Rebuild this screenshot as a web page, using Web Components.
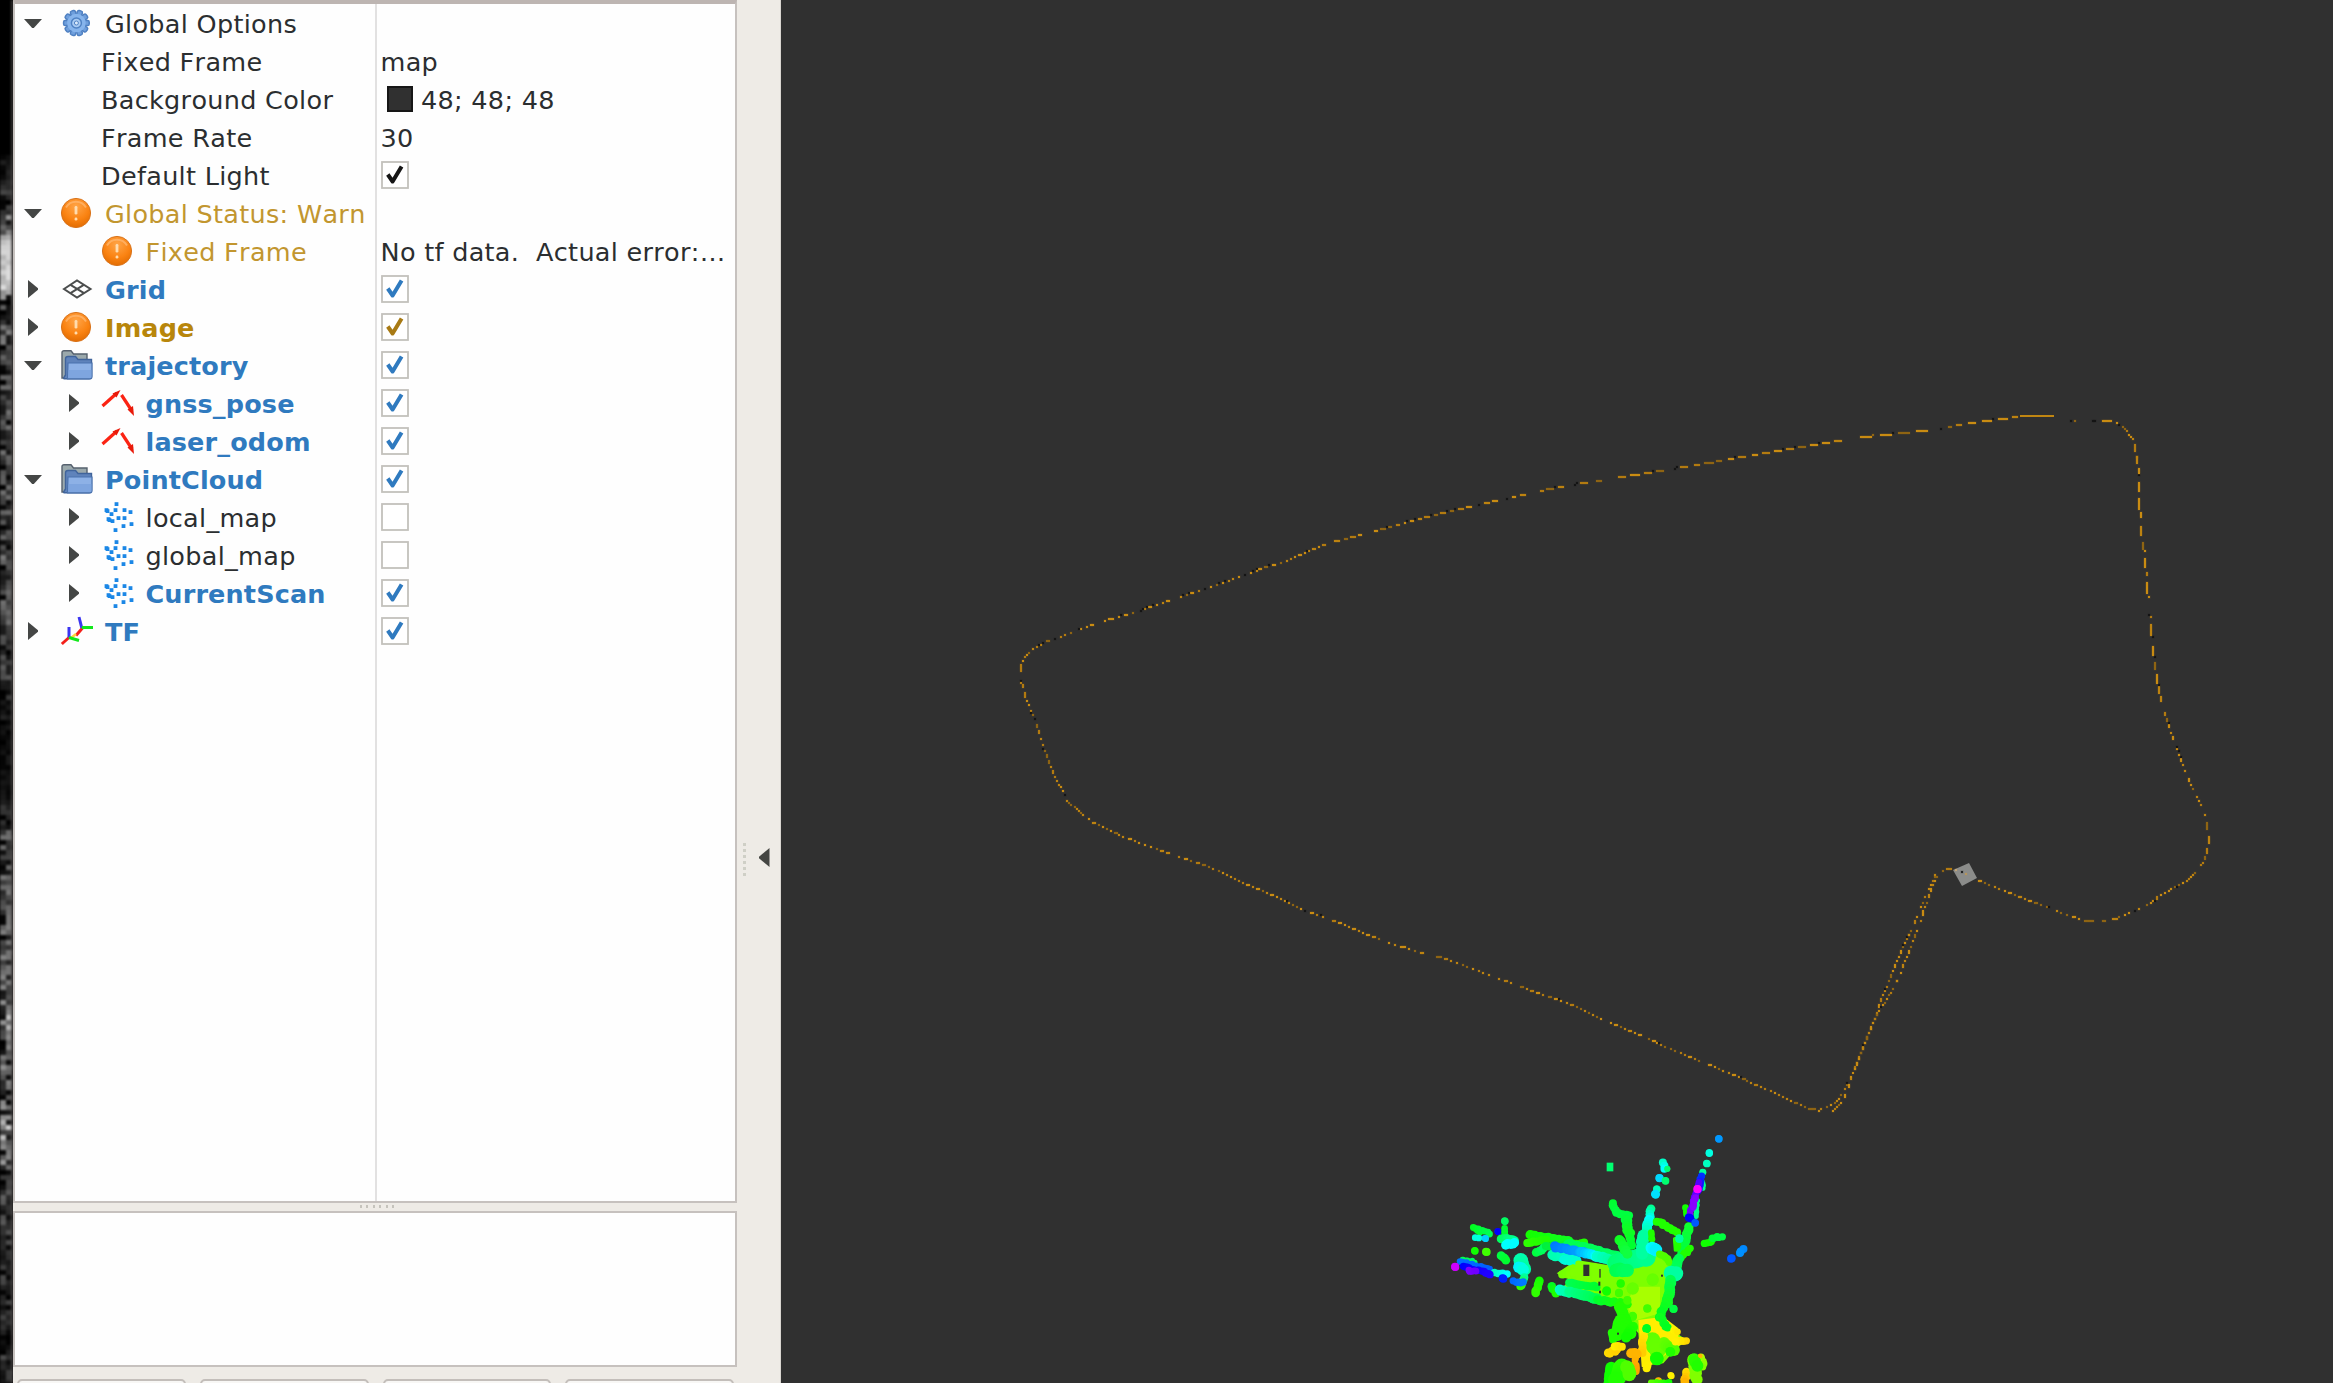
<!DOCTYPE html>
<html lang="en">
<head>
<meta charset="utf-8">
<title>RViz</title>
<style>
html,body{margin:0;height:100%;overflow:hidden;background:#303030}
</style>
</head>
<body>
<rviz-window></rviz-window>

<script>
const BLUE = '#2f7abf', WARN = '#c2962f', WARNB = '#b8860b', INK = '#2b2e30';

function rng(seed){ return () => { seed = (seed * 1664525 + 1013904223) >>> 0; return seed / 4294967296; }; }

function define(name, html, init){
  customElements.define(name, class extends HTMLElement {
    constructor(){
      super();
      this.attachShadow({mode:'open'}).innerHTML = html;
    }
    connectedCallback(){ if (init && !this.ready) { this.ready = true; init(this, this.shadowRoot); } }
  });
}

/* ---------- icons ---------- */
const dots = [[15,1],[5,7],[10,11],[14,7],[23,7],[29,9],[7,16],[11,18],[17,15],[23,15],[30,21],[22,23],[14,27],[8,17],[6,8]];
const gearTeeth = Array.from({length:10}, (_,i) => `<rect x="12.8" y="2.200" width="5.200" height="6" rx="1.6" transform="rotate(${i*36+18} 15.4 15)"/>`).join('');
const ICONS = {
  gear: `<g fill="#6f9fdc" stroke="#4f80c2" stroke-width="1.5">${gearTeeth}</g>
    <circle cx="15.4" cy="15" r="9.3" fill="#86b4ec"/>
    <circle cx="15.4" cy="15" r="5" fill="#a9cbf3" stroke="#4f82c4" stroke-width="1.5"/>
    <circle cx="15.4" cy="15" r="2" fill="#dcebfc" stroke="#4f82c4" stroke-width="1"/>`,
  warn: `<defs><radialGradient id="g" cx=".5" cy=".28" r=".75"><stop offset="0" stop-color="#ffa548"/><stop offset=".6" stop-color="#fa8312"/><stop offset="1" stop-color="#e06a00"/></radialGradient></defs>
    <circle cx="15" cy="15" r="14.6" fill="url(#g)" stroke="#d9741c" stroke-width="1"/>
    <path d="M5 9.5A11.5 11.5 0 0 1 25 9.5" fill="none" stroke="#ffb56b" stroke-width="2" opacity=".8"/>
    <g fill="#ffdcae"><rect x="13.6" y="8" width="2.800" height="8.500" rx="1.300"/><rect x="13.6" y="19.500" width="2.800" height="3" rx="1.300"/></g>`,
  grid: `<g fill="none" stroke="#4b4d4d" stroke-width="2"><path d="M3 15L16 6.5L29.5 15L16 23.5Z"/><path d="M9.5 10.8L23 19.2M22.8 10.8L9.5 19.2"/></g>`,
  folder: `<path d="M1 2.5Q1 .8 3 .8H10L12.500 4H26V28H1Z" fill="#9ba9ac" stroke="#56616e" stroke-width="1.4"/>
    <path d="M4.500 9Q4.500 6.500 7 6.500H14.500L17 9.500H30.500V26Q30.500 28.800 28 28.800H3Q2 28.500 4.500 25Z" fill="#5f83bb" stroke="#40649b" stroke-width="1.4"/>
    <path d="M7 13H31V26.500Q31 28.800 29 28.800H6.500Z" fill="#8db1e6" stroke="#4a72ad" stroke-width="1.2"/>
    <path d="M7.500 20H30.500V28H7Z" fill="#77a0dc" opacity=".7"/>`,
  path: `<g fill="none" stroke="#fb2313" stroke-width="3.2"><path d="M0.500 18L15 5"/><path d="M19.500 7L30 23"/></g>
    <g fill="#e81a0a"><path d="M18.500 2L14.500 9.500L10.500 5.500Z"/><path d="M32 28L31 18L25.500 21.500Z"/></g>`,
  cloud: dots.map(([x,y]) => `<rect x="${x-2.4}" y="${y-.8}" width="3.8" height="3.8" fill="#1b87e6"/>`).join(''),
  tf: `<g fill="none" stroke-width="3"><path d="M21.500 12L15 19.500" stroke="#f4201a"/><path d="M15 18L10 22" stroke="#ffd23c" stroke-width="2.400"/><path d="M20.800 12L18 1" stroke="#3b35f0"/><path d="M20.800 11.500H32" stroke="#12e81c"/>
    <path d="M8 21.500L.8 28" stroke="#f4201a"/><path d="M8 21.500V11" stroke="#3b35f0"/><path d="M8 21.500L18 24.500" stroke="#12e81c"/></g>`
};
define('rv-icon', `<style>:host{display:block;white-space:normal;width:32px;height:30px;flex:none}svg{display:block;overflow:visible}</style><svg width="32" height="30" viewBox="0 0 32 30"></svg>`,
  (el, r) => { r.querySelector('svg').innerHTML = ICONS[el.getAttribute('name')] || ''; });

define('rv-arrow', `<style>:host{display:flex;white-space:normal;width:36px;height:38px;flex:none;align-items:center;justify-content:center}svg{display:block}</style><svg width="18" height="18" viewBox="0 0 18 18"><path fill="#444645"/></svg>`,
  (el, r) => r.querySelector('path').setAttribute('d', el.hasAttribute('open') ? 'M0 5H18L9.8 14H8.2Z' : 'M4 0L14 8.300V9.700L4 18Z'));

define('rv-check', `<style>:host{display:block;white-space:normal;width:28px;height:28px;flex:none}svg{display:block}</style><svg width="28" height="28" viewBox="0 0 28 28"><rect x="1" y="1" width="26" height="26" fill="#fff" stroke="#c3c1bc" stroke-width="1.800"/><path fill="none" stroke-width="4" d="M6.800 13.500L11.600 20.500L20.600 5.500" stroke-linejoin="round"/></svg>`,
  (el, r) => { const p = r.querySelector('path'); if (el.hasAttribute('off')) p.remove(); else p.setAttribute('stroke', el.getAttribute('color')); });

/* ---------- one property row ---------- */
define('rv-row', `<style>
:host{display:grid;grid-template-columns:360px 2px 1fr;height:38px;font:25.5px "DejaVu Sans",sans-serif;font-kerning:none;letter-spacing:.3px;color:${INK};white-space:pre}
.l,.v{display:flex;align-items:center;height:38px;min-width:0}
.l span,.v span{height:38px;line-height:40px;display:block}
.v{grid-column:3}
.name{font-weight:var(--w,400);color:var(--c,${INK});letter-spacing:var(--ls,.3px)}
rv-icon{margin:0 12px 0 0}
rv-check{margin-left:4px}
.v span{padding-left:3.500px}
i{display:block;box-sizing:border-box;width:26px;height:26px;margin-left:10px;background:#303030;border:2px solid #161616}
i + span{padding-left:8px!important}
</style><div class="l"></div><div class="v"></div>`,
(el, r) => {
  const a = n => el.getAttribute(n), l = r.querySelector('.l'), v = r.querySelector('.v');
  const depth = +(a('depth') || 0), icon = a('icon');
  l.style.paddingLeft = (icon ? depth * 40.5 : 86) + 'px';
  let h = '';
  if (icon) {
    h += a('state') === 'leaf' ? '<div style="width:36px"></div>' : `<rv-arrow ${a('state') === 'open' ? 'open' : ''}></rv-arrow>`;
    h += `<div style="width:10px"></div><rv-icon name="${icon}"></rv-icon>`;
  }
  l.innerHTML = h + '<span class="name"></span>';
  l.querySelector('.name').textContent = a('name');
  if (a('color')) el.style.setProperty('--c', a('color'));
  if (el.hasAttribute('bold')) { el.style.setProperty('--w', 700); el.style.setProperty('--ls', '.15px'); }
  if (a('check') === 'off') v.innerHTML = '<rv-check off></rv-check>';
  else if (a('check')) v.innerHTML = `<rv-check color="${a('check')}"></rv-check>`;
  else if (a('value')) {
    v.innerHTML = (el.hasAttribute('swatch') ? '<i></i>' : '') + '<span></span>';
    v.querySelector('span').textContent = a('value');
  }
});

/* ---------- display tree ---------- */
const ROWS = [
  {name:'Global Options', icon:'gear', state:'open'},
  {name:'Fixed Frame', value:'map'},
  {name:'Background Color', value:'48; 48; 48', swatch:''},
  {name:'Frame Rate', value:'30'},
  {name:'Default Light', check:'#151515'},
  {name:'Global Status: Warn', icon:'warn', state:'open', color:WARN},
  {name:'Fixed Frame', icon:'warn', state:'leaf', depth:1, color:WARN, value:'No tf data.  Actual error:…'},
  {name:'Grid', icon:'grid', state:'shut', color:BLUE, bold:'', check:BLUE},
  {name:'Image', icon:'warn', state:'shut', color:WARNB, bold:'', check:'#a87a14'},
  {name:'trajectory', icon:'folder', state:'open', color:BLUE, bold:'', check:BLUE},
  {name:'gnss_pose', icon:'path', state:'shut', depth:1, color:BLUE, bold:'', check:BLUE},
  {name:'laser_odom', icon:'path', state:'shut', depth:1, color:BLUE, bold:'', check:BLUE},
  {name:'PointCloud', icon:'folder', state:'open', color:BLUE, bold:'', check:BLUE},
  {name:'local_map', icon:'cloud', state:'shut', depth:1, check:'off'},
  {name:'global_map', icon:'cloud', state:'shut', depth:1, check:'off'},
  {name:'CurrentScan', icon:'cloud', state:'shut', depth:1, color:BLUE, bold:'', check:BLUE},
  {name:'TF', icon:'tf', state:'shut', color:BLUE, bold:'', check:BLUE}
];
define('rv-tree', `<style>
:host{display:block;box-sizing:border-box;height:1203px;border:2px solid #c6c1be;border-top:4px solid #bdb5b2;
 background:linear-gradient(90deg,transparent 360px,#e2e1e1 360px,#e2e1e1 362px,transparent 362px),#fefefe}
</style>`, (el, r) => {
  for (const d of ROWS) {
    const e = document.createElement('rv-row');
    for (const k in d) e.setAttribute(k, d[k]);
    r.append(e);
  }
});

define('rv-description', `<style>:host{display:block;box-sizing:border-box;height:156px;background:#fefefe;border:2px solid #c6c1be}</style>`);

define('rv-splitter', `<style>:host{display:flex;height:8px;gap:4.500px;justify-content:center;padding:2px 0 0 4px;box-sizing:border-box}
b{width:2px;height:3px;background:#c5c3bc}</style><b></b><b></b><b></b><b></b><b></b><b></b>`);

define('rv-buttons', `<style>:host{display:flex;gap:14px;padding:12px 3px 0 4px;height:16px;box-sizing:border-box;overflow:hidden}
b{flex:1;height:30px;box-sizing:border-box;border:2px solid #c3beba;border-radius:5px;background:#f8f7f5}b:first-child{border-color:#b3aeaa}</style><b></b><b></b><b></b><b></b>`);

define('rv-collapse', `<style>:host{display:flex;width:44px;box-sizing:border-box;border-right:1px solid #d9d5d0;background:#eeebe6;align-items:center;padding:336px 0 0 5.500px;gap:13.500px}
div{display:grid;gap:3.500px}b{width:3px;height:2.500px;background:#cfcfc6}svg{display:block;margin-top:-4px}</style>
<div><b></b><b></b><b></b><b></b><b></b><b></b></div><svg width="11" height="19" viewBox="0 0 11 19"><path d="M10.500 0V19L0 10.200V8.800Z" fill="#444542"/></svg>`);

/* ---------- sliver of the camera image at the window edge ---------- */
define('rv-camera', `<style>:host{display:block;width:13px;height:1383px;background:#000;overflow:hidden}canvas{display:block;filter:blur(1.200px)}</style><canvas width="13" height="1383"></canvas>`,
(el, r) => {
  const c = r.querySelector('canvas').getContext('2d'), R = rng(11);
  const lv = [[0,0],[150,0],[165,22],[210,60],[228,120],[240,205],[285,200],[300,90],[330,90],[350,50],[480,55],[600,55],[690,40],[745,12],[790,15],[820,50],[960,60],[1010,90],[1040,75],[1090,65],[1130,100],[1180,50],[1300,34],[1383,36]];
  for (let y = 0; y < 1383; y += 5) {
    let i = 1; while (lv[i][0] < y) i++;
    const t = (y - lv[i-1][0]) / (lv[i][0] - lv[i-1][0]), m = lv[i-1][1] + t * (lv[i][1] - lv[i-1][1]);
    for (let x = 0; x < 13; x += 6) {
      const k = m > 150 ? m - 25 + R() * 45 : m * Math.pow(R(), 1.2) * 2.200;
      c.fillStyle = `rgb(${k|0},${k|0},${k|0})`; c.fillRect(x, y, 6, 5);
    }
  }
  c.fillStyle = 'rgba(80,76,76,.75)'; c.fillRect(11, 0, 2, 1383);
});

/* ---------- 3D viewport ---------- */
const OUTER = [[2054,416],[2016,416],[1982,420],[1955,424],[1935,428],[1900,432],[1860,436],[1786,448],[1711,461],[1637,473],[1562,485],[1488,501],[1424,516],[1384,527],[1324,543],[1284,560],[1255,569],[1220,582],[1180,595],[1140,609],[1112,617],[1079,628],[1060,635],[1041,642],[1031,648],[1024,656],[1020,664],[1020,680],[1024,695],[1033,717],[1040,740],[1051,770],[1058,785],[1065,798],[1078,810],[1092,821],[1115,832],[1140,842],[1160,849],[1190,859],[1220,870],[1246,883],[1272,894],[1306,910],[1340,922],[1368,934],[1390,942],[1420,951],[1450,959],[1490,974],[1530,989],[1570,1003],[1602,1018],[1653,1040],[1700,1060],[1743,1078],[1780,1094],[1796,1102],[1810,1108],[1818,1109],[1828,1106],[1836,1100],[1842,1090],[1848,1078],[1854,1066],[1862,1046],[1869,1028],[1875,1014],[1880,998],[1886,984],[1893,966],[1900,950],[1908,933],[1914,920],[1922,900],[1928,886],[1934,874],[1944,869],[1954,868]];
const INNER = [[1832,1110],[1842,1100],[1846,1089],[1850,1074],[1855,1064],[1862,1046],[1869,1028],[1875,1014],[1882,1003],[1888,994],[1896,979],[1902,963],[1908,949],[1913,936],[1918,924],[1924,905],[1930,888],[1937,873]];
const RIGHT = [[1978,879],[2000,888],[2029,900],[2045,905],[2062,912],[2080,918],[2088,920],[2103,920],[2115,918],[2130,912],[2143,906],[2155,898],[2168,890],[2184,881],[2196,870],[2202,861],[2206,850],[2208,836],[2206,822],[2204,810],[2196,796],[2188,778],[2180,758],[2172,736],[2165,716],[2160,698],[2156,678],[2153,655],[2150,625],[2148,605],[2146,580],[2144,555],[2141,535],[2140,520],[2138,500],[2138,472],[2136,455],[2133,440],[2124,428],[2115,422],[2105,420],[2068,420]];

/* scan strokes on a 3x grid whose origin is (1430,1120): x1,y1,x2,y2,radius,from,to */
const HULLS = [
  ['#7dff00', '565,440 640,410 690,395 735,430 720,520 700,600 720,620 740,640 770,660 735,690 700,730 660,735 630,700 625,640 590,600 565,550 510,540 400,500 420,480 380,460 440,420 500,430'],
  ['#a8ff00', '610,500 690,500 690,580 620,600 590,560'],
  ['#ffee00', '625,600 700,590 745,625 745,650 775,662 740,680 650,745 635,740'],
];
const SCAN = [
  [300,345,420,365,14,'#14ff00','#10ff20'],[290,368,350,360,12,'#30ff00','#20ff00'],[320,395,340,385,13,'#00ff40','#00ff60'],[350,380,460,370,12,'#00f040','#20ff00'],
  [420,380,560,415,22,'#00ff50','#00ff60'],[370,405,430,415,16,'#00ffb0','#00ffc8'],[400,420,440,420,14,'#00f8e0','#00ffd0'],
  [372,380,460,397,14,'#0078ff','#00a8ff'],[450,395,500,408,15,'#00b0ff','#00ffff'],[500,408,560,425,16,'#00ffd0','#00ff90'],
  [560,430,650,410,28,'#00ff70','#00ff90'],[555,450,590,450,20,'#00ff50','#00ff60'],
  [395,465,430,460,12,'#70ff00','#80ff00'],[447,430,447,475,10,'#80ff00','#80ff00'],[495,440,495,470,9,'#80ff00','#80ff00'],
  [365,500,380,520,13,'#00ff20','#20ff00'],[388,510,420,518,15,'#00ffd0','#00ffa0'],[420,515,500,535,16,'#00ff90','#00ff50'],[500,540,590,552,13,'#00ff30','#20ff00'],
  [418,488,500,500,12,'#00ff50','#00ff30'],[530,512,530,514,13,'#10ff00','#10ff00'],[572,490,572,491,12,'#20ff00','#20ff00'],[567,518,567,520,12,'#40ff00','#40ff00'],[592,540,592,542,12,'#40ff00','#40ff00'],[608,588,608,590,13,'#40ff00','#40ff00'],[608,505,608,506,18,'#66ff00','#66ff00'],[668,478,668,480,18,'#66ff00','#66ff00'],[652,565,652,566,12,'#40ff00','#40ff00'],
  [548,250,560,280,12,'#00ff30','#00ff40'],[565,280,595,285,12,'#00ff40','#00ff40'],[588,290,595,340,15,'#00ff40','#10ff20'],[600,340,605,375,13,'#10ff20','#00ff30'],[570,360,590,400,15,'#10ff20','#10ff40'],
  [662,268,660,290,13,'#00ff90','#00ffe0'],[658,300,645,345,15,'#00ffff','#00ffb0'],[640,345,635,400,18,'#00ffa0','#00ffa0'],[665,340,665,360,10,'#20ff00','#20ff00'],[665,385,680,388,19,'#00ffff','#00f0ff'],
  [682,305,740,335,12,'#20ff00','#20ff00'],[690,400,720,425,11,'#50ff00','#50ff00'],
  [776,322,755,400,14,'#10ff30','#00ff40'],[780,385,750,415,11,'#20ff00','#20ff00'],[740,360,740,385,12,'#30ff00','#20ff00'],[748,355,748,357,12,'#00ffa0','#00ffa0'],
  [745,415,730,470,15,'#00ff50','#00ff60'],[725,460,740,462,22,'#00ffa0','#00ffa0'],[722,480,712,550,16,'#00ff50','#10ff20'],[705,550,690,590,13,'#10ff20','#00ff20'],[690,590,712,625,12,'#10ff20','#00ff20'],[730,566,731,567,12,'#00ff40','#00ff40'],
  [570,560,600,640,17,'#20ff00','#20ff00'],[570,605,560,645,20,'#20ff00','#20ff00'],[610,620,590,650,16,'#20ff00','#10ff00'],[546,640,548,660,12,'#20ff00','#20ff00'],
  [650,625,650,627,13,'#00ff20','#00ff20'],[665,660,680,690,24,'#60ff00','#66ff00'],[700,670,730,690,18,'#66ff00','#50ff00'],[680,715,681,716,20,'#20ff00','#10ff00'],[720,695,722,696,14,'#20ff00','#20ff00'],
  [770,663,735,665,11,'#ffd400','#fff000'],[730,630,740,635,10,'#fff600','#ffe800'],[640,650,635,700,12,'#ffe600','#ffcc00'],
  [535,700,560,690,13,'#ffdc00','#ffd000'],[555,680,575,678,12,'#fff000','#ffe400'],[605,700,620,700,15,'#ffb400','#ffb400'],[615,715,618,755,10,'#ffb400','#ffa000'],[650,735,650,745,12,'#fff000','#fff000'],
  [545,745,540,790,18,'#10ff00','#10ff00'],[575,740,560,780,24,'#30ff00','#20ff00'],[590,740,600,765,20,'#50ff00','#50ff00'],
  [722,766,724,768,10,'#fff000','#fff000'],[685,782,686,783,10,'#ffb400','#ffb400'],[665,788,720,788,9,'#60ff00','#10ff00'],[770,755,765,785,13,'#ffe000','#ffb400'],[790,720,800,780,17,'#80ff00','#80ff00'],[815,710,820,740,11,'#b8ff00','#80ff00'],[795,720,800,735,18,'#30ff00','#20ff00'],[810,707,812,708,6,'#ffb400','#ffb400'],
  [128,322,150,335,10,'#00ff20','#00ff30'],[145,328,180,340,10,'#00ff30','#00ff50'],[138,352,145,353,10,'#00ffe0','#00ffe0'],[165,355,167,356,10,'#00d0ff','#00d0ff'],[203,334,204,335,10,'#1400ff','#0000ff'],[224,303,225,304,11,'#00ff70','#00ff60'],[224,325,224,340,10,'#00ff30','#00ff30'],
  [215,355,255,360,13,'#00ff60','#00ff90'],[225,375,255,368,14,'#00ffff','#00ffff'],[134,392,135,393,11,'#10ff00','#10ff00'],[168,395,170,396,12,'#40ff00','#40ff00'],[215,408,228,420,13,'#00ff40','#00ff30'],
  [272,420,280,445,22,'#00ffb0','#00ffa0'],[268,440,280,450,17,'#00f0ff','#00ffe0'],[285,470,270,500,12,'#00ffa0','#30ff00'],
  [95,418,135,425,8,'#00ff50','#00ff60'],[90,425,180,448,10,'#0070ff','#0060ff'],[75,440,76,441,12,'#c000ff','#d000ff'],[98,440,175,460,11,'#0000ff','#2000ff'],[115,452,140,454,10,'#8000ff','#7000ff'],[195,458,232,462,11,'#00ffc0','#00ffff'],[218,475,220,476,12,'#0010ff','#0020ff'],[178,462,180,464,11,'#2000ff','#2000ff'],[252,484,280,488,11,'#0068ff','#0078ff'],
  [328,482,316,518,13,'#10ff00','#30ff00'],
  [700,128,702,145,12,'#00ffc8','#00ffff'],[712,146,712,147,9,'#00ff70','#00ff70'],[688,174,689,175,12,'#00d8ff','#00d8ff'],[706,182,707,183,11,'#00ff70','#00ff70'],[680,207,681,208,11,'#00ff90','#00ffc0'],[676,222,677,223,13,'#00d8ff','#00e0ff'],
  [838,98,838,100,11,'#00ffe0','#00ffe0'],[830,130,831,131,11,'#00ffc0','#00ffc0'],[818,156,819,157,10,'#00ffa0','#00ffa0'],[866,56,867,57,11,'#0098ff','#0098ff'],[818,185,818,205,8,'#00ff90','#00ff90'],[768,265,770,280,10,'#10ff00','#10ff00'],[800,240,800,290,8,'#00ff80','#00ff90'],
  [814,170,805,215,11,'#0030ff','#2000ff'],[808,190,780,280,10,'#5000ff','#7800ff'],[802,207,803,208,12,'#ff00ff','#ff00ff'],[795,235,788,260,10,'#8800ff','#8800ff'],[775,292,780,296,12,'#0000ff','#0000ff'],[795,308,796,309,11,'#0050ff','#0058ff'],
  [825,370,845,366,11,'#10ff00','#10ff00'],[845,353,875,352,11,'#00ff30','#00ff40'],[940,388,928,400,12,'#0088ff','#0090ff'],[903,416,905,415,12,'#0050ff','#0058ff']
];

define('rv-viewport', `<style>:host{display:block;flex:1;height:1383px;background:#303030}canvas{display:block}</style><canvas width="1552" height="1383"></canvas>`,
(el, r) => {
  const c = r.querySelector('canvas').getContext('2d'), OX = 781;
  c.translate(-OX, 0);
  const R = rng(77);
  const put = (x, y, col) => {
    c.fillStyle = col;
    c.globalAlpha = .22; c.fillRect(x - .5, y - .5, 3, 3);
    c.globalAlpha = 1; c.fillRect(x, y, 2, 2);
  };
  const GOLD = ['#c98c12','#bd8310','#b37b10','#c98c12','#8f6413'];
  /* walk the line on a 2px raster; every step of the staircase becomes one dash */
  const trace = (pts, dark) => {
    const cells = [];
    for (let i = 1; i < pts.length; i++) {
      const [ax, ay] = pts[i-1], [bx, by] = pts[i], dx = bx-ax, dy = by-ay;
      const n = Math.max(1, Math.round(Math.max(Math.abs(dx), Math.abs(dy)) / 2));
      for (let s = 0; s < n; s++) cells.push([Math.round((ax + dx*s/n) / 2), Math.round((ay + dy*s/n) / 2), Math.abs(dx) >= Math.abs(dy) ? 1 : 0]);
    }
    for (let i = 0; i < cells.length;) {
      const ax = cells[i][2];
      let j = i + 1;
      while (j < cells.length && cells[j][ax] === cells[i][ax] && cells[j][2] === ax && j - i < 9) j++;
      const L = j - i, q = R();
      if (q > .1) {
        const col = GOLD[Math.floor(R() * GOLD.length)];
        const draw = L < 3 ? 1 : L === 3 ? (R() < .6 ? 2 : 1) : Math.max(2, Math.round(L * (.45 + R() * .3)));
        for (let k = 0; k < draw; k++) put(cells[i+k][0]*2, cells[i+k][1]*2, col);
        if (R() < dark && L > 1) put(cells[j-1][0]*2, cells[j-1][1]*2, '#141414');
      } else if (R() < dark * 2) put(cells[i][0]*2, cells[i][1]*2, '#141414');
      i = j;
    }
  };
  const i0 = OUTER.findIndex(p => p[1] > 700);
  trace(OUTER.slice(1, i0 + 1), .3);
  trace(OUTER.slice(i0), .06);
  trace(INNER, .05);
  trace(RIGHT.slice(0, 23), .1);
  trace(RIGHT.slice(22), .3);
  c.fillStyle = '#c08612'; c.fillRect(2020, 415, 34, 2);

  c.fillStyle = '#8b8c8a'; c.beginPath(); c.moveTo(1953,870); c.lineTo(1969,863); c.lineTo(1977,878); c.lineTo(1962,886); c.fill();
  put(1961, 871, '#222'); put(1965, 873, '#b5945c'); put(1955, 869, '#c0a57c');

  c.translate(1430, 1120); c.scale(1/3, 1/3);
  for (const [col, p] of HULLS) { c.fillStyle = col; c.fill(new Path2D('M' + p.split(' ').join('L') + 'Z')); }
  const hex = h => [1,3,5].map(i => parseInt(h.substr(i,2),16));
  for (const [x1,y1,x2,y2,rad,a,b] of SCAN) {
    const A = hex(a), B = hex(b), len = Math.hypot(x2-x1, y2-y1), n = Math.max(1, Math.round(len / 7));
    for (let i = 0; i <= n; i++) {
      const t = i/n, j = len > 5 ? 2.500 : 0;
      c.fillStyle = 'rgb(' + A.map((v,k) => Math.round(v + (B[k]-v)*t)).join(',') + ')';
      c.beginPath(); c.arc(x1 + (x2-x1)*t + (R()-.5)*j*2, y1 + (y2-y1)*t + (R()-.5)*j*2, rad, 0, 7); c.fill();
    }
  }
  c.fillStyle = '#00ff70'; c.fillRect(530, 128, 20, 26);
  c.fillStyle = '#303030';
  c.fillRect(460, 434, 18, 34); c.fillRect(508, 447, 4, 26); c.fillRect(505, 485, 6, 12); c.fillRect(507, 512, 6, 8); c.fillRect(693, 464, 6, 6); c.fillRect(561, 638, 6, 6);
  c.beginPath(); c.moveTo(676,366); c.lineTo(690,336); c.lineTo(728,350); c.lineTo(732,400); c.lineTo(712,392); c.lineTo(696,372); c.fill();
});

define('rviz-window', `<style>
:host{display:flex;width:2333px;height:1383px;overflow:hidden;background:#eeebe6}
.side{width:724px;height:1383px;flex:none}
</style>
<rv-camera></rv-camera>
<div class="side"><rv-tree></rv-tree><rv-splitter></rv-splitter><rv-description></rv-description><rv-buttons></rv-buttons></div>
<rv-collapse></rv-collapse>
<rv-viewport></rv-viewport>`);
</script>
</body>
</html>
